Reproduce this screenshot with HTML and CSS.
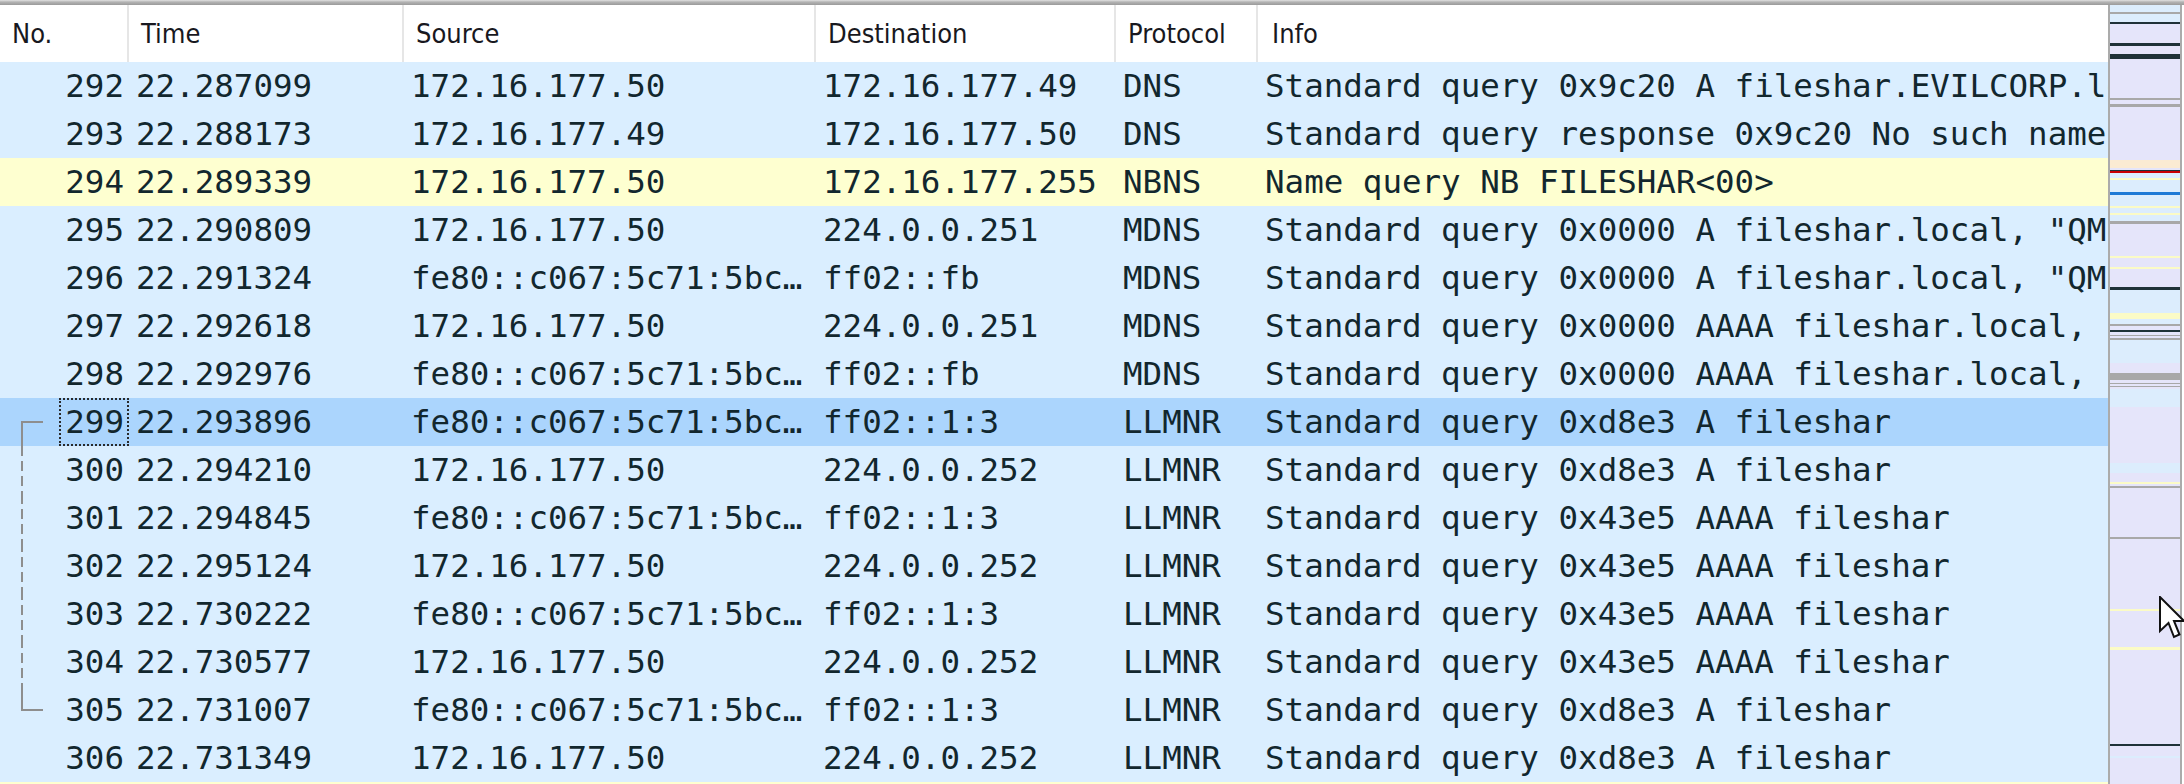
FILE: index.html
```html
<!DOCTYPE html>
<html>
<head>
<meta charset="utf-8">
<link rel="stylesheet" href="styles.css">
</head>
<body>
<div class="window">
  <div class="topbar"></div>
  <div class="main">
    <div class="list">
      <div class="hdr">
        <div class="hc">No.</div><div class="hc">Time</div><div class="hc">Source</div><div class="hc">Destination</div><div class="hc">Protocol</div><div class="hc last">Info</div>
      </div>
      <div class="row udp"><div class="c no">292</div><div class="c">22.287099</div><div class="c">172.16.177.50</div><div class="c">172.16.177.49</div><div class="c">DNS</div><div class="c">Standard query 0x9c20 A fileshar.EVILCORP.local</div></div>
      <div class="row udp"><div class="c no">293</div><div class="c">22.288173</div><div class="c">172.16.177.49</div><div class="c">172.16.177.50</div><div class="c">DNS</div><div class="c">Standard query response 0x9c20 No such name A fileshar.EVILCORP.local</div></div>
      <div class="row nb"><div class="c no">294</div><div class="c">22.289339</div><div class="c">172.16.177.50</div><div class="c">172.16.177.255</div><div class="c">NBNS</div><div class="c">Name query NB FILESHAR&lt;00&gt;</div></div>
      <div class="row udp"><div class="c no">295</div><div class="c">22.290809</div><div class="c">172.16.177.50</div><div class="c">224.0.0.251</div><div class="c">MDNS</div><div class="c">Standard query 0x0000 A fileshar.local, "QM" question</div></div>
      <div class="row udp"><div class="c no">296</div><div class="c">22.291324</div><div class="c">fe80::c067:5c71:5bc…</div><div class="c">ff02::fb</div><div class="c">MDNS</div><div class="c">Standard query 0x0000 A fileshar.local, "QM" question</div></div>
      <div class="row udp"><div class="c no">297</div><div class="c">22.292618</div><div class="c">172.16.177.50</div><div class="c">224.0.0.251</div><div class="c">MDNS</div><div class="c">Standard query 0x0000 AAAA fileshar.local, "QM" question</div></div>
      <div class="row udp"><div class="c no">298</div><div class="c">22.292976</div><div class="c">fe80::c067:5c71:5bc…</div><div class="c">ff02::fb</div><div class="c">MDNS</div><div class="c">Standard query 0x0000 AAAA fileshar.local, "QM" question</div></div>
      <div class="row sel"><div class="c no rel-first focus">299</div><div class="c">22.293896</div><div class="c">fe80::c067:5c71:5bc…</div><div class="c">ff02::1:3</div><div class="c">LLMNR</div><div class="c">Standard query 0xd8e3 A fileshar</div></div>
      <div class="row udp"><div class="c no rel-mid">300</div><div class="c">22.294210</div><div class="c">172.16.177.50</div><div class="c">224.0.0.252</div><div class="c">LLMNR</div><div class="c">Standard query 0xd8e3 A fileshar</div></div>
      <div class="row udp"><div class="c no rel-mid">301</div><div class="c">22.294845</div><div class="c">fe80::c067:5c71:5bc…</div><div class="c">ff02::1:3</div><div class="c">LLMNR</div><div class="c">Standard query 0x43e5 AAAA fileshar</div></div>
      <div class="row udp"><div class="c no rel-mid">302</div><div class="c">22.295124</div><div class="c">172.16.177.50</div><div class="c">224.0.0.252</div><div class="c">LLMNR</div><div class="c">Standard query 0x43e5 AAAA fileshar</div></div>
      <div class="row udp"><div class="c no rel-mid">303</div><div class="c">22.730222</div><div class="c">fe80::c067:5c71:5bc…</div><div class="c">ff02::1:3</div><div class="c">LLMNR</div><div class="c">Standard query 0x43e5 AAAA fileshar</div></div>
      <div class="row udp"><div class="c no rel-mid">304</div><div class="c">22.730577</div><div class="c">172.16.177.50</div><div class="c">224.0.0.252</div><div class="c">LLMNR</div><div class="c">Standard query 0x43e5 AAAA fileshar</div></div>
      <div class="row udp"><div class="c no rel-last">305</div><div class="c">22.731007</div><div class="c">fe80::c067:5c71:5bc…</div><div class="c">ff02::1:3</div><div class="c">LLMNR</div><div class="c">Standard query 0xd8e3 A fileshar</div></div>
      <div class="row udp"><div class="c no">306</div><div class="c">22.731349</div><div class="c">172.16.177.50</div><div class="c">224.0.0.252</div><div class="c">LLMNR</div><div class="c">Standard query 0xd8e3 A fileshar</div></div>
      <div class="row nb"><div class="c no">307</div><div class="c">22.731500</div><div class="c">172.16.177.50</div><div class="c">172.16.177.255</div><div class="c">NBNS</div><div class="c">Name query NB FILESHAR&lt;20&gt;</div></div>
    </div>
    <div class="minimap">
      <div class="s lb" style="height:7px"></div>
      <div class="s g" style="height:2px"></div>
      <div class="s lb" style="height:8px"></div>
      <div class="s dk" style="height:2px"></div>
      <div class="s lv" style="height:19px"></div>
      <div class="s dk" style="height:3px"></div>
      <div class="s lv" style="height:8px"></div>
      <div class="s dk" style="height:5px"></div>
      <div class="s lv" style="height:39px"></div>
      <div class="s g" style="height:2px"></div>
      <div class="s lv" style="height:4px"></div>
      <div class="s g" style="height:3px"></div>
      <div class="s lv" style="height:53px"></div>
      <div class="s be" style="height:8px"></div>
      <div class="s lv" style="height:2px"></div>
      <div class="s dk" style="height:1px"></div>
      <div class="s rd" style="height:2px"></div>
      <div class="s lb" style="height:5px"></div>
      <div class="s ly" style="height:2px"></div>
      <div class="s lb" style="height:12px"></div>
      <div class="s bl" style="height:3px"></div>
      <div class="s lb" style="height:11px"></div>
      <div class="s ly" style="height:2px"></div>
      <div class="s lb" style="height:5px"></div>
      <div class="s ly" style="height:2px"></div>
      <div class="s lb" style="height:6px"></div>
      <div class="s g" style="height:3px"></div>
      <div class="s lv" style="height:32px"></div>
      <div class="s ly" style="height:2px"></div>
      <div class="s lv" style="height:9px"></div>
      <div class="s ly" style="height:2px"></div>
      <div class="s lv" style="height:18px"></div>
      <div class="s dk" style="height:3px"></div>
      <div class="s lb" style="height:23px"></div>
      <div class="s ly" style="height:6px"></div>
      <div class="s lb" style="height:5px"></div>
      <div class="s g" style="height:2px"></div>
      <div class="s lv" style="height:4px"></div>
      <div class="s dk" style="height:2px"></div>
      <div class="s lv" style="height:3px"></div>
      <div class="s g" style="height:1px"></div>
      <div class="s lv" style="height:2px"></div>
      <div class="s g" style="height:2px"></div>
      <div class="s lb" style="height:23px"></div>
      <div class="s lv" style="height:10px"></div>
      <div class="s g" style="height:7px"></div>
      <div class="s lv" style="height:3px"></div>
      <div class="s g" style="height:1px"></div>
      <div class="s lv" style="height:2px"></div>
      <div class="s g" style="height:1px"></div>
      <div class="s lv" style="height:2px"></div>
      <div class="s lb" style="height:18px"></div>
      <div class="s lv" style="height:56px"></div>
      <div class="s lb" style="height:10px"></div>
      <div class="s lv" style="height:9px"></div>
      <div class="s ly" style="height:2px"></div>
      <div class="s lv" style="height:2px"></div>
      <div class="s g" style="height:2px"></div>
      <div class="s lv" style="height:49px"></div>
      <div class="s g" style="height:2px"></div>
      <div class="s lv" style="height:70px"></div>
      <div class="s ly" style="height:2px"></div>
      <div class="s lv" style="height:36px"></div>
      <div class="s ly" style="height:3px"></div>
      <div class="s lv" style="height:94px"></div>
      <div class="s dk" style="height:2px"></div>
      <div class="s lv" style="height:10px"></div>
      <div class="s lb" style="height:2px"></div>
      <div class="s lv" style="height:26px"></div>
    </div>
  </div>
  <svg class="cursor" width="26" height="44" viewBox="0 0 26 44">
    <path d="M1 1 L1 35 L9.5 27 L15 41 L20.5 38.5 L15 25 L25 25 Z" fill="#ffffff" stroke="#111111" stroke-width="2" stroke-linejoin="miter"/>
  </svg>
</div>
</body>
</html>
```

FILE: styles.css
```css
html, body {
  margin: 0;
  padding: 0;
  width: 2184px;
  height: 784px;
  overflow: hidden;
  background: #ffffff;
}

.window {
  position: relative;
  width: 2184px;
  height: 784px;
  overflow: hidden;
}

.topbar {
  height: 5px;
  background: linear-gradient(to bottom, #e2e2e2 0, #b4b4b4 40%, #9a9a9a 100%);
}

.main {
  display: flex;
  height: 779px;
}

.list {
  width: 2108px;
  flex: none;
  overflow: hidden;
}

.hdr {
  display: grid;
  grid-template-columns: 129px 275px 412px 300px 142px 850px;
  height: 57px;
  background: #ffffff;
}

.hc {
  box-sizing: border-box;
  padding-left: 12px;
  border-right: 2px solid #e6e6e6;
  font-family: "DejaVu Sans Condensed", "DejaVu Sans", sans-serif;
  font-stretch: condensed;
  font-size: 27px;
  line-height: 58px;
  color: #181820;
  white-space: nowrap;
  overflow: hidden;
}

.hc.last {
  border-right: none;
  padding-left: 14px;
}

.row {
  display: grid;
  grid-template-columns: 129px 275px 412px 300px 142px 850px;
  height: 48px;
  font-family: "DejaVu Sans Mono", monospace;
  font-size: 32.5px;
  line-height: 48px;
  color: #12272e;
}

.row.udp { background: #daeeff; }
.row.nb { background: #feffd0; }
.row.sel { background: #abd5fd; }

.c {
  box-sizing: border-box;
  padding: 0 0 0 7px;
  white-space: nowrap;
  overflow: hidden;
}

.c.no {
  position: relative;
  text-align: right;
  padding: 0 5px 0 0;
}

.rel-first::before {
  content: "";
  position: absolute;
  left: 21px;
  top: 23px;
  bottom: 0;
  width: 20px;
  border-top: 2px solid #8e8e8e;
  border-left: 2px solid #8e8e8e;
}

.rel-mid::before {
  content: "";
  position: absolute;
  left: 21px;
  top: 0;
  bottom: 0;
  width: 2px;
  background: repeating-linear-gradient(to bottom, #8e8e8e 0 10px, transparent 10px 15px);
}

.rel-last::before {
  content: "";
  position: absolute;
  left: 21px;
  top: 0;
  height: 23px;
  width: 20px;
  border-bottom: 2px solid #8e8e8e;
  border-left: 2px solid #8e8e8e;
}

.focus::after {
  content: "";
  position: absolute;
  left: 59px;
  right: 0;
  top: 0;
  bottom: 0;
  border: 2px dotted #2a2a2a;
}

.minimap {
  width: 70px;
  flex: none;
  border-left: 2px solid #ababab;
  border-right: 2px solid #ababab;
  margin-right: 2px;
  display: flex;
  flex-direction: column;
  background: #e5e5fa;
}

.s { flex: none; }
.s.lv { background: #e5e5fa; }
.s.lb { background: #dcedfd; }
.s.ly { background: #fbfbc6; }
.s.g { background: #a8a8a8; }
.s.dk { background: #1f3238; }
.s.be { background: #fbebd3; }
.s.rd { background: #c80000; }
.s.bl { background: #1e7ad6; }

.cursor {
  position: absolute;
  left: 2159px;
  top: 596px;
}
```
